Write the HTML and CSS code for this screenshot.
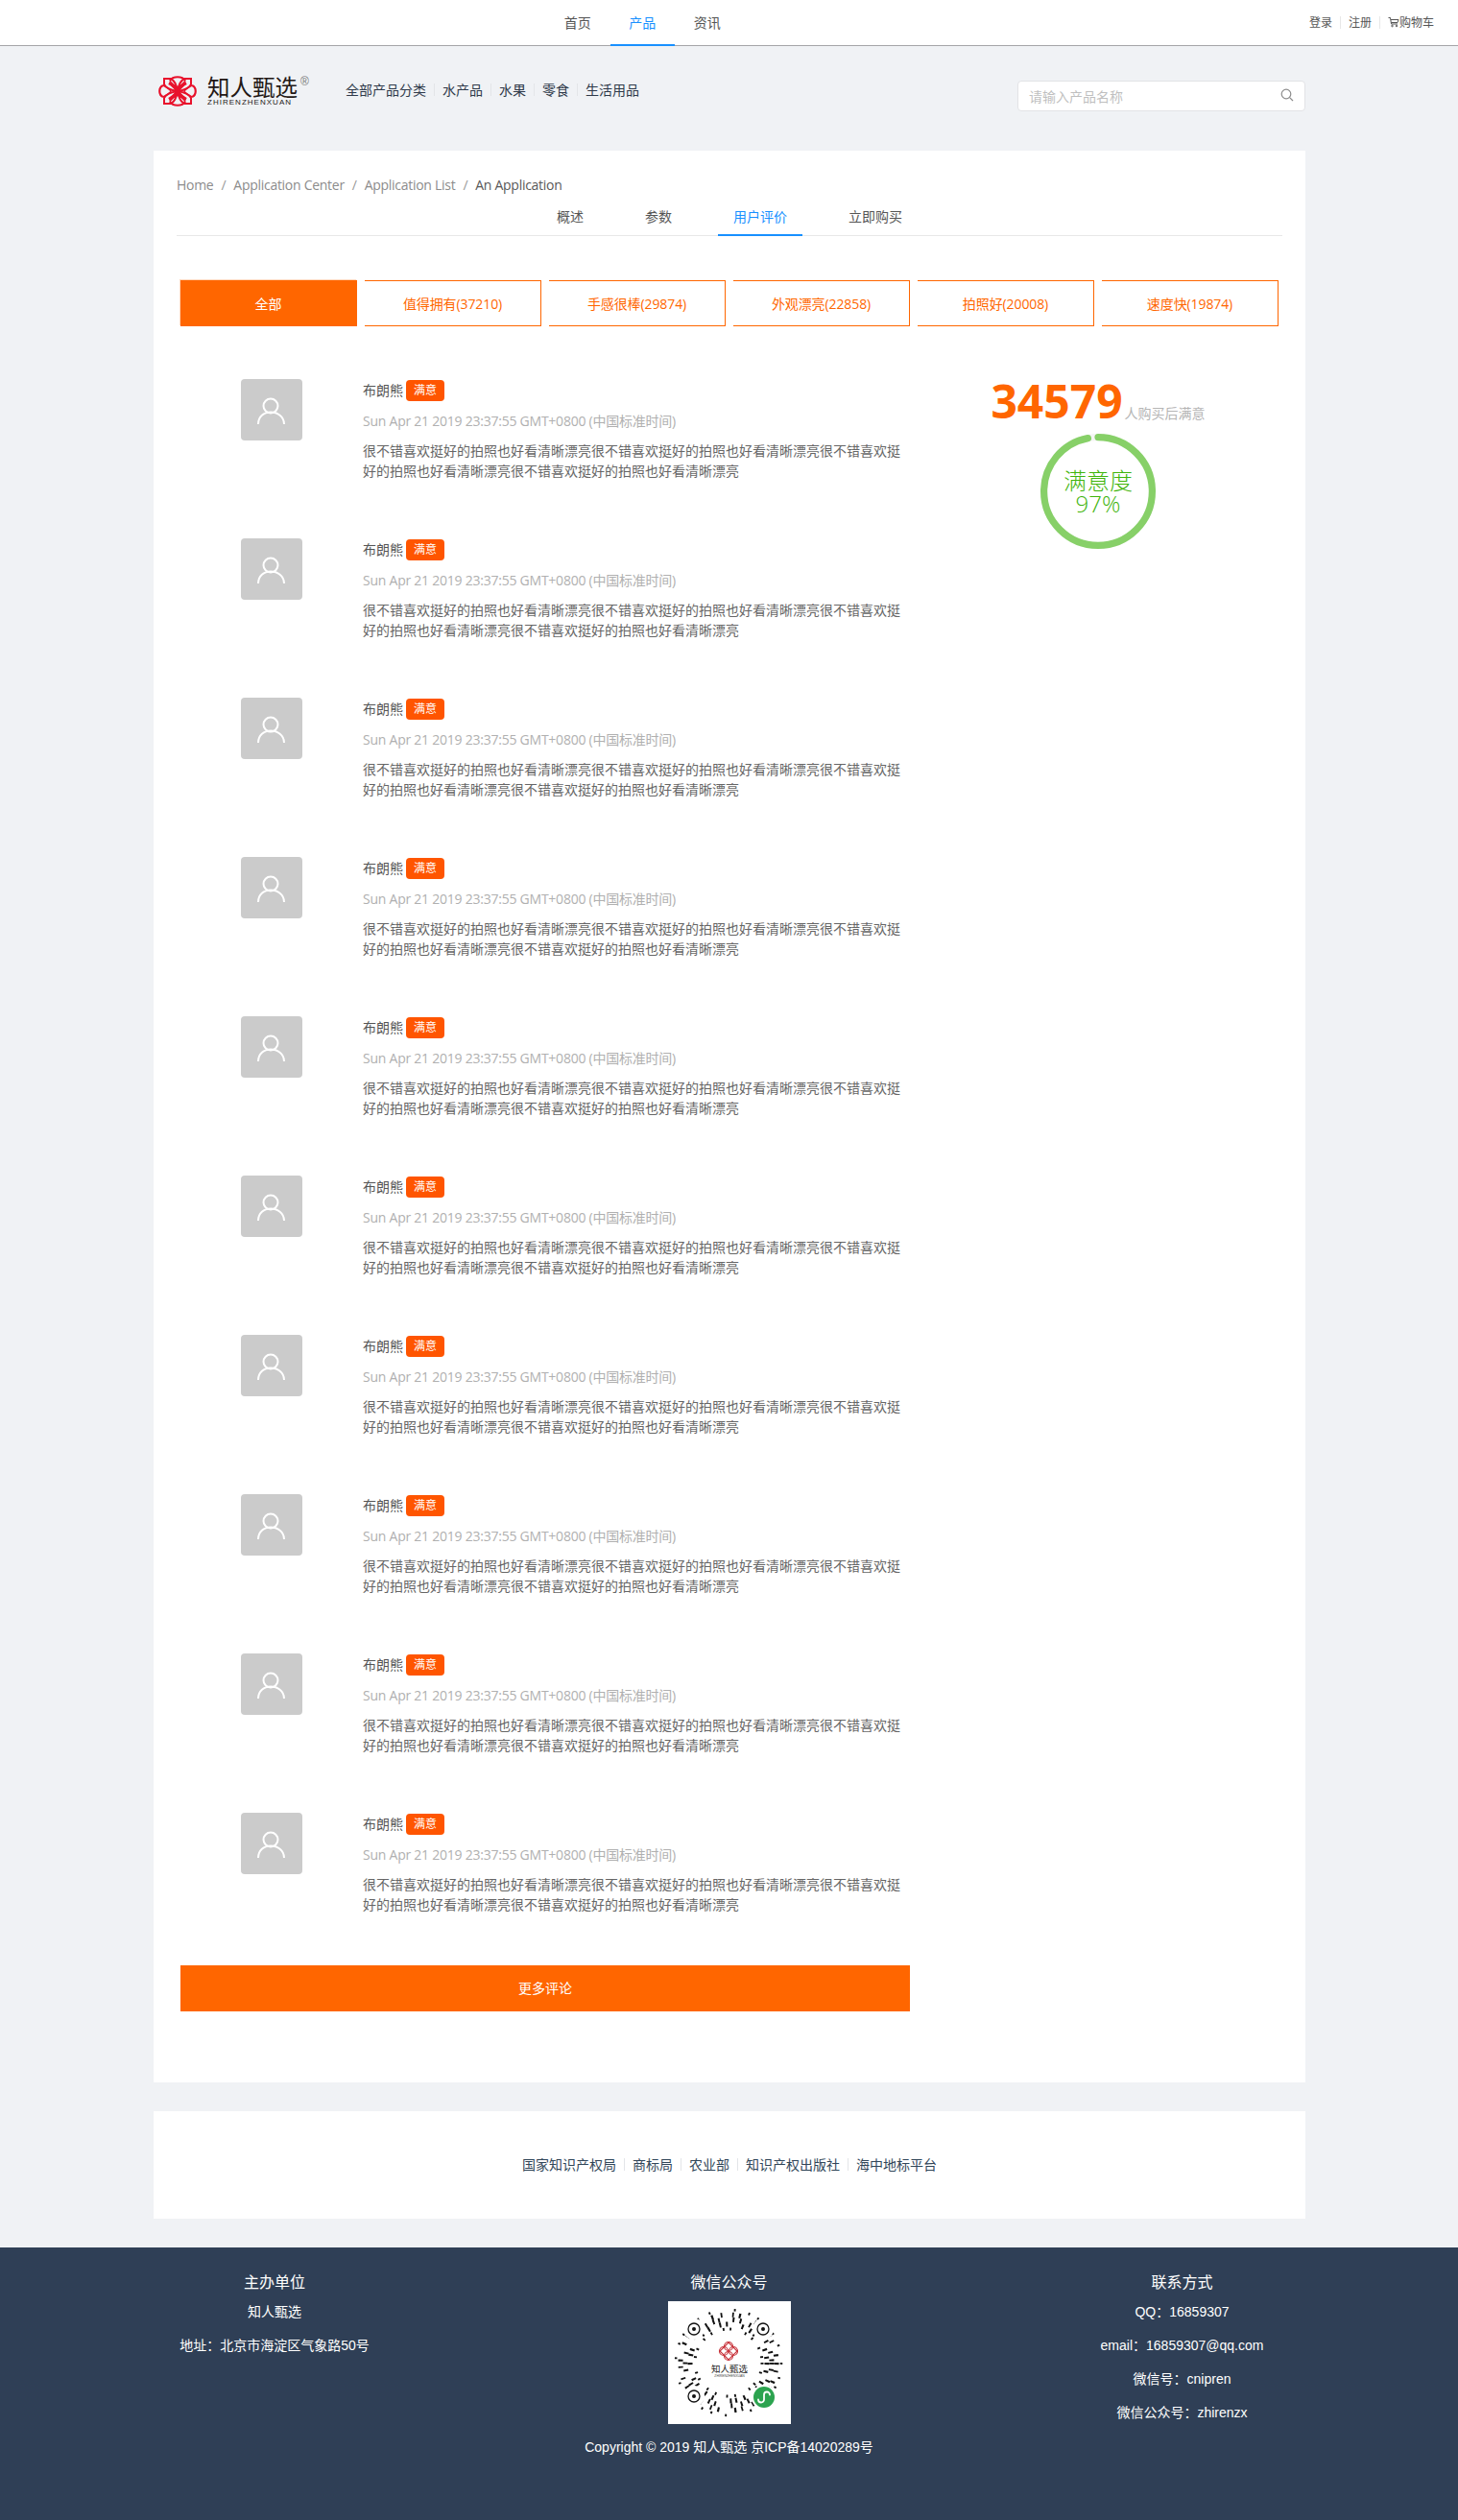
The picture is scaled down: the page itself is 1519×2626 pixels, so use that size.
FILE: index.html
```html
<!DOCTYPE html>
<html lang="zh-CN">
<head>
<meta charset="utf-8">
<title>知人甄选</title>
<link rel="stylesheet" href="styles.css">
</head>
<body>
<header class="topbar">
  <nav class="topnav">
    <a class="topnav-item">首页</a>
    <a class="topnav-item is-active">产品</a>
    <a class="topnav-item">资讯</a>
  </nav>
  <div class="userlinks">
    <a class="userlink">登录</a>
    <a class="userlink">注册</a>
    <a class="userlink cart">
      <svg class="cart-icon" viewBox="0 0 12 12" width="12" height="12" fill="none" stroke="#555" stroke-width="1"><path d="M0.5 1.5h2l1 6.5h6.5M3 3.5h8l-1 3H3.4"/><circle cx="4.5" cy="10" r="0.8"/><circle cx="9" cy="10" r="0.8"/></svg>购物车
    </a>
  </div>
</header>

<section class="masthead">
  <div class="logo">
    <svg class="logo-mark" viewBox="0 0 40 32" width="40" height="32" fill="none" stroke="#e8122c" stroke-width="2">
      <path d="M12 5C15 0 25 0 28 5M12 27C15 32 25 32 28 27M5 10C0 12 0 20 5 22M35 10C40 12 40 20 35 22" stroke-width="2.200"/>
      <path d="M6 3h7c4 2 6 7 7 13-7-1-12-3-14-7zM34 3h-7c-4 2-6 7-7 13 7-1 12-3 14-7zM6 29h7c4-2 6-7 7-13-7 1-12 3-14 7zM34 29h-7c-4-2-6-7-7-13 7 1 12 3 14 7z"/>
      <path d="M11 7.500c2 1 6 4 9 8.500M29 7.500c-2 1-6 4-9 8.500M11 24.500c2-1 6-4 9-8.500M29 24.500c-2-1-6-4-9-8.500" stroke-width="3.200"/>
      <path d="M5 10c4 2 7 4 8 6-1 2-4 4-8 6M35 10c-4 2-7 4-8 6 1 2 4 4 8 6M12 5c2 4 6 6 8 7 2-1 6-3 8-7M12 27c2-4 6-6 8-7 2 1 6 3 8 7" stroke-width="1.500"/>
    </svg>
    <div class="logo-words">
      <span class="logo-cn">知人甄选</span>
      <span class="logo-en">ZHIRENZHENXUAN</span>
    </div>
    <span class="logo-reg">®</span>
  </div>
  <nav class="catnav">
    <a class="catnav-item">全部产品分类</a>
    <a class="catnav-item">水产品</a>
    <a class="catnav-item">水果</a>
    <a class="catnav-item">零食</a>
    <a class="catnav-item">生活用品</a>
  </nav>
  <div class="search">
    <span class="search-placeholder">请输入产品名称</span>
    <svg class="search-icon" viewBox="0 0 14 14" width="14" height="14" fill="none" stroke="#8c8c8c" stroke-width="1.2"><circle cx="6" cy="6" r="4.8"/><path d="M9.6 9.6L13 13"/></svg>
  </div>
</section>

<main class="card">
  <div class="crumbs">
    <span class="crumb">Home</span><span class="crumb-sep">/</span>
    <span class="crumb">Application Center</span><span class="crumb-sep">/</span>
    <span class="crumb">Application List</span><span class="crumb-sep">/</span>
    <span class="crumb crumb-current">An Application</span>
  </div>
  <div class="tabs">
    <a class="tab">概述</a>
    <a class="tab">参数</a>
    <a class="tab is-active">用户评价</a>
    <a class="tab">立即购买</a>
  </div>

  <div class="filters">
    <a class="filter is-active">全部</a>
    <a class="filter">值得拥有(37210)</a>
    <a class="filter">手感很棒(29874)</a>
    <a class="filter">外观漂亮(22858)</a>
    <a class="filter">拍照好(20008)</a>
    <a class="filter">速度快(19874)</a>
  </div>

  <div class="content">
    <div class="reviews-col">
      <ul class="reviews">
        <li class="review">
          <div class="avatar"><svg viewBox="0 0 64 64" width="64" height="64" fill="none" stroke="#fff" stroke-width="2"><circle cx="31" cy="28" r="7.5"/><path d="M18 47c0-8 6-12.500 13-12.500S45 39 45 47"/></svg></div>
          <div class="review-body">
            <div class="review-head"><span class="review-name">布朗熊</span><span class="badge">满意</span></div>
            <div class="review-time">Sun Apr 21 2019 23:37:55 GMT+0800 (中国标准时间)</div>
            <p class="review-text">很不错喜欢挺好的拍照也好看清晰漂亮很不错喜欢挺好的拍照也好看清晰漂亮很不错喜欢挺好的拍照也好看清晰漂亮很不错喜欢挺好的拍照也好看清晰漂亮</p>
          </div>
        </li>
        <li class="review">
          <div class="avatar"><svg viewBox="0 0 64 64" width="64" height="64" fill="none" stroke="#fff" stroke-width="2"><circle cx="31" cy="28" r="7.5"/><path d="M18 47c0-8 6-12.500 13-12.500S45 39 45 47"/></svg></div>
          <div class="review-body">
            <div class="review-head"><span class="review-name">布朗熊</span><span class="badge">满意</span></div>
            <div class="review-time">Sun Apr 21 2019 23:37:55 GMT+0800 (中国标准时间)</div>
            <p class="review-text">很不错喜欢挺好的拍照也好看清晰漂亮很不错喜欢挺好的拍照也好看清晰漂亮很不错喜欢挺好的拍照也好看清晰漂亮很不错喜欢挺好的拍照也好看清晰漂亮</p>
          </div>
        </li>
        <li class="review">
          <div class="avatar"><svg viewBox="0 0 64 64" width="64" height="64" fill="none" stroke="#fff" stroke-width="2"><circle cx="31" cy="28" r="7.5"/><path d="M18 47c0-8 6-12.500 13-12.500S45 39 45 47"/></svg></div>
          <div class="review-body">
            <div class="review-head"><span class="review-name">布朗熊</span><span class="badge">满意</span></div>
            <div class="review-time">Sun Apr 21 2019 23:37:55 GMT+0800 (中国标准时间)</div>
            <p class="review-text">很不错喜欢挺好的拍照也好看清晰漂亮很不错喜欢挺好的拍照也好看清晰漂亮很不错喜欢挺好的拍照也好看清晰漂亮很不错喜欢挺好的拍照也好看清晰漂亮</p>
          </div>
        </li>
        <li class="review">
          <div class="avatar"><svg viewBox="0 0 64 64" width="64" height="64" fill="none" stroke="#fff" stroke-width="2"><circle cx="31" cy="28" r="7.5"/><path d="M18 47c0-8 6-12.500 13-12.500S45 39 45 47"/></svg></div>
          <div class="review-body">
            <div class="review-head"><span class="review-name">布朗熊</span><span class="badge">满意</span></div>
            <div class="review-time">Sun Apr 21 2019 23:37:55 GMT+0800 (中国标准时间)</div>
            <p class="review-text">很不错喜欢挺好的拍照也好看清晰漂亮很不错喜欢挺好的拍照也好看清晰漂亮很不错喜欢挺好的拍照也好看清晰漂亮很不错喜欢挺好的拍照也好看清晰漂亮</p>
          </div>
        </li>
        <li class="review">
          <div class="avatar"><svg viewBox="0 0 64 64" width="64" height="64" fill="none" stroke="#fff" stroke-width="2"><circle cx="31" cy="28" r="7.5"/><path d="M18 47c0-8 6-12.500 13-12.500S45 39 45 47"/></svg></div>
          <div class="review-body">
            <div class="review-head"><span class="review-name">布朗熊</span><span class="badge">满意</span></div>
            <div class="review-time">Sun Apr 21 2019 23:37:55 GMT+0800 (中国标准时间)</div>
            <p class="review-text">很不错喜欢挺好的拍照也好看清晰漂亮很不错喜欢挺好的拍照也好看清晰漂亮很不错喜欢挺好的拍照也好看清晰漂亮很不错喜欢挺好的拍照也好看清晰漂亮</p>
          </div>
        </li>
        <li class="review">
          <div class="avatar"><svg viewBox="0 0 64 64" width="64" height="64" fill="none" stroke="#fff" stroke-width="2"><circle cx="31" cy="28" r="7.5"/><path d="M18 47c0-8 6-12.500 13-12.500S45 39 45 47"/></svg></div>
          <div class="review-body">
            <div class="review-head"><span class="review-name">布朗熊</span><span class="badge">满意</span></div>
            <div class="review-time">Sun Apr 21 2019 23:37:55 GMT+0800 (中国标准时间)</div>
            <p class="review-text">很不错喜欢挺好的拍照也好看清晰漂亮很不错喜欢挺好的拍照也好看清晰漂亮很不错喜欢挺好的拍照也好看清晰漂亮很不错喜欢挺好的拍照也好看清晰漂亮</p>
          </div>
        </li>
        <li class="review">
          <div class="avatar"><svg viewBox="0 0 64 64" width="64" height="64" fill="none" stroke="#fff" stroke-width="2"><circle cx="31" cy="28" r="7.5"/><path d="M18 47c0-8 6-12.500 13-12.500S45 39 45 47"/></svg></div>
          <div class="review-body">
            <div class="review-head"><span class="review-name">布朗熊</span><span class="badge">满意</span></div>
            <div class="review-time">Sun Apr 21 2019 23:37:55 GMT+0800 (中国标准时间)</div>
            <p class="review-text">很不错喜欢挺好的拍照也好看清晰漂亮很不错喜欢挺好的拍照也好看清晰漂亮很不错喜欢挺好的拍照也好看清晰漂亮很不错喜欢挺好的拍照也好看清晰漂亮</p>
          </div>
        </li>
        <li class="review">
          <div class="avatar"><svg viewBox="0 0 64 64" width="64" height="64" fill="none" stroke="#fff" stroke-width="2"><circle cx="31" cy="28" r="7.5"/><path d="M18 47c0-8 6-12.500 13-12.500S45 39 45 47"/></svg></div>
          <div class="review-body">
            <div class="review-head"><span class="review-name">布朗熊</span><span class="badge">满意</span></div>
            <div class="review-time">Sun Apr 21 2019 23:37:55 GMT+0800 (中国标准时间)</div>
            <p class="review-text">很不错喜欢挺好的拍照也好看清晰漂亮很不错喜欢挺好的拍照也好看清晰漂亮很不错喜欢挺好的拍照也好看清晰漂亮很不错喜欢挺好的拍照也好看清晰漂亮</p>
          </div>
        </li>
        <li class="review">
          <div class="avatar"><svg viewBox="0 0 64 64" width="64" height="64" fill="none" stroke="#fff" stroke-width="2"><circle cx="31" cy="28" r="7.5"/><path d="M18 47c0-8 6-12.500 13-12.500S45 39 45 47"/></svg></div>
          <div class="review-body">
            <div class="review-head"><span class="review-name">布朗熊</span><span class="badge">满意</span></div>
            <div class="review-time">Sun Apr 21 2019 23:37:55 GMT+0800 (中国标准时间)</div>
            <p class="review-text">很不错喜欢挺好的拍照也好看清晰漂亮很不错喜欢挺好的拍照也好看清晰漂亮很不错喜欢挺好的拍照也好看清晰漂亮很不错喜欢挺好的拍照也好看清晰漂亮</p>
          </div>
        </li>
        <li class="review">
          <div class="avatar"><svg viewBox="0 0 64 64" width="64" height="64" fill="none" stroke="#fff" stroke-width="2"><circle cx="31" cy="28" r="7.5"/><path d="M18 47c0-8 6-12.500 13-12.500S45 39 45 47"/></svg></div>
          <div class="review-body">
            <div class="review-head"><span class="review-name">布朗熊</span><span class="badge">满意</span></div>
            <div class="review-time">Sun Apr 21 2019 23:37:55 GMT+0800 (中国标准时间)</div>
            <p class="review-text">很不错喜欢挺好的拍照也好看清晰漂亮很不错喜欢挺好的拍照也好看清晰漂亮很不错喜欢挺好的拍照也好看清晰漂亮很不错喜欢挺好的拍照也好看清晰漂亮</p>
          </div>
        </li>
      </ul>
      <a class="more">更多评论</a>
    </div>

    <aside class="stats">
      <div class="stats-line"><span class="stats-num">34579</span><span class="stats-label">人购买后满意</span></div>
      <div class="ring">
        <svg class="ring-svg" viewBox="0 0 100 100" width="120" height="120" fill="none" stroke-width="6">
          <circle cx="50" cy="50" r="47" stroke="#f5f5f5"/>
          <circle cx="50" cy="50" r="47" stroke="#87d068" stroke-linecap="round" pathLength="100" stroke-dasharray="97 3" transform="rotate(-90 50 50)"/>
        </svg>
        <div class="ring-text"><div>满意度</div><div>97%</div></div>
      </div>
    </aside>
  </div>
</main>

<section class="links">
  <a class="link">国家知识产权局</a>
  <a class="link">商标局</a>
  <a class="link">农业部</a>
  <a class="link">知识产权出版社</a>
  <a class="link">海中地标平台</a>
</section>

<footer class="footer">
  <div class="footer-col">
    <h4 class="footer-title">主办单位</h4>
    <p class="footer-line">知人甄选</p>
    <p class="footer-line">地址：北京市海淀区气象路50号</p>
  </div>
  <div class="footer-col">
    <h4 class="footer-title">微信公众号</h4>
    <svg class="qr" viewBox="0 0 128 128" width="128" height="128">
      <rect width="128" height="128" fill="#fff"/>
      <g fill="none" stroke="#111">
        <circle cx="63" cy="64" r="35" stroke-width="3" pathLength="360" stroke-dasharray="3 13 3 19 3 9 3 24 3 11 3 17"/>
        <circle cx="63" cy="64" r="40" stroke-width="5" pathLength="360" stroke-dasharray="3 9 3 15 3 7 3 21 3 10 3 5 3 25"/>
        <circle cx="63" cy="64" r="45" stroke-width="5" pathLength="360" stroke-dasharray="2.500 6 2.500 13 2.500 8 2.500 5 2.500 17 2.500 7 2.500 11 2.500 20"/>
        <circle cx="63" cy="64" r="50" stroke-width="5" pathLength="360" stroke-dasharray="2.500 7 2 11 2.500 5 2 15 2.500 9 2 12 2 6 2.500 18"/>
        <circle cx="63" cy="64" r="55" stroke-width="2.500" pathLength="360" stroke-dasharray="2 14 2 9 2 21 2 12 2 26"/>
      </g>
      <circle cx="27" cy="29" r="11" fill="#fff"/>
      <circle cx="99" cy="29" r="11" fill="#fff"/>
      <circle cx="27" cy="99" r="11" fill="#fff"/>
      <g fill="none" stroke="#111" stroke-width="1.300">
        <circle cx="27" cy="29" r="6"/><circle cx="99" cy="29" r="6"/><circle cx="27" cy="99" r="6"/>
      </g>
      <g fill="#111">
        <circle cx="27" cy="29" r="2"/><circle cx="99" cy="29" r="2"/><circle cx="27" cy="99" r="2"/>
      </g>
      <g fill="none" stroke="#c8353d" stroke-width="1.200">
        <path d="M63 43l9 9-9 9-9-9z"/><circle cx="63" cy="47" r="4.500"/><circle cx="63" cy="57" r="4.500"/><circle cx="58" cy="52" r="4.500"/><circle cx="68" cy="52" r="4.500"/>
      </g>
      <text class="qr-brand" x="64" y="73.500" text-anchor="middle">知人甄选</text>
      <text class="qr-sub" x="64" y="79" text-anchor="middle">ZHIRENZHENXUAN</text>
      <circle cx="100" cy="100" r="13" fill="#fff"/>
      <circle cx="100" cy="100" r="11" fill="#2ca34f"/>
      <path d="M94 102.500a3 3 0 1 0 6 0v-5a3 3 0 1 1 6 0" fill="none" stroke="#fff" stroke-width="1.800" stroke-linecap="round"/>
    </svg>
    <p class="footer-line">Copyright © 2019 知人甄选 京ICP备14020289号</p>
  </div>
  <div class="footer-col footer-col-contact">
    <h4 class="footer-title">联系方式</h4>
    <p class="footer-line">QQ：16859307</p>
    <p class="footer-line">email：16859307@qq.com</p>
    <p class="footer-line">微信号：cnipren</p>
    <p class="footer-line">微信公众号：zhirenzx</p>
  </div>
</footer>
</body>
</html>
```

FILE: styles.css
```css
* { box-sizing: border-box; }
html, body { margin: 0; padding: 0; }
body {
  background: #f0f2f5;
  font-family: "Open Sans", "Noto Sans CJK SC", sans-serif;
  font-size: 14px;
  color: #555;
}
a { color: inherit; text-decoration: none; }
ul { list-style: none; margin: 0; padding: 0; }
p, h4 { margin: 0; }

/* top bar */
.topbar {
  display: flex;
  height: 48px;
  padding: 0 25px 0 568px;
  background: #fff;
  border-bottom: 1px solid #a5a5a8;
}
.topnav { display: flex; height: 48px; }
.topnav-item {
  width: 67.500px;
  height: 48px;
  line-height: 48px;
  text-align: center;
  color: #555;
  border-bottom: 2px solid transparent;
}
.topnav-item.is-active { color: #1890ff; border-bottom-color: #1890ff; }
.userlinks { display: flex; align-items: center; margin-left: auto; height: 46px; }
.userlink {
  display: flex;
  align-items: center;
  height: 13px;
  padding: 0 8px;
  font-size: 12px;
  line-height: 13px;
  color: #555;
  border-left: 1px solid #e8e8e8;
}
.userlink:first-child { border-left: 0; }
.userlink:last-child { padding-right: 0; }
.cart-icon { margin-right: 0; flex: none; }

/* masthead */
.masthead {
  display: flex;
  align-items: flex-start;
  height: 109px;
  padding: 0 159px 0 165px;
}
.logo {
  display: flex;
  width: 157px;
  height: 32px;
  margin-top: 31px;
}
.logo-mark { flex: none; }
.logo-words { display: flex; flex-direction: column; margin: 0 0 0 11px; }
.logo-cn {
  font-size: 23.500px;
  line-height: 24px;
  color: #231815;
  font-weight: 400;
}
.logo-en {
  font-family: "Liberation Sans", sans-serif;
  font-size: 8px;
  line-height: 8px;
  letter-spacing: 1.020px;
  color: #231815;
  white-space: nowrap;
}
.logo-reg {
  font-family: "Liberation Sans", sans-serif;
  font-size: 12px;
  line-height: 12px;
  color: #777;
  margin: 0 0 0 3px;
}
.catnav { display: flex; align-items: center; margin: 34px 0 0 30px; height: 22px; }
.catnav-item {
  padding: 0 8px;
  height: 13px;
  line-height: 13px;
  color: #2f3a4a;
  border-left: 1px solid #e3e5e8;
}
.catnav-item:first-child { border-left: 0; }
.search {
  display: flex;
  align-items: center;
  justify-content: space-between;
  width: 300px;
  height: 32px;
  margin: 36px 0 0 auto;
  padding: 0 11px;
  background: #fff;
  border: 1px solid #e2e3e6;
  border-radius: 4px;
}
.search-placeholder { color: #bfbfbf; line-height: 22px; margin-top: 2px; }
.search-icon { flex: none; margin-top: -2px; }

/* main card */
.card {
  width: 1200px;
  height: 2013px;
  margin: 0 0 0 160px;
  padding: 25px 24px 0;
  background: #fff;
}
.crumbs { display: flex; height: 22px; line-height: 22px; color: #8c8c8c; white-space: pre; letter-spacing: -0.28px; }
.crumb-sep { margin: 0 8px; color: #999; }
.crumb-current { color: #595959; }
.tabs {
  display: flex;
  justify-content: center;
  gap: 32px;
  height: 42px;
  border-bottom: 1px solid #e8e8e8;
}
.tab {
  height: 42px;
  padding: 11px 16px 7px;
  line-height: 22px;
  color: #555;
  border-bottom: 2px solid transparent;
}
.tab.is-active { color: #1890ff; border-bottom-color: #1890ff; }

.filters { display: flex; gap: 8px; margin: 46px 0 53px 4px; }
.filter {
  width: 184px;
  height: 48px;
  line-height: 47px;
  text-align: center;
  color: #ff6600;
  border: 1px solid #ff6600;
  border-left: 0;
  letter-spacing: -0.1px;
}
.filter.is-active {
  color: #fff;
  background: #ff6600;
  box-shadow: -1px -1px 0 #ffd9bf;
}

.content { display: flex; gap: 8px; margin-left: 4px; }
.reviews-col { width: 760px; padding-top: 2px; }
.reviews { display: flex; flex-direction: column; gap: 60px; }
.review { display: flex; padding-left: 63px; }
.avatar {
  flex: none;
  width: 64px;
  height: 64px;
  margin-right: 63px;
  background: #cbcbcb;
  border-radius: 4px;
}
.avatar svg { display: block; }
.review-body { width: 566px; padding-top: 1px; }
.review-head { display: flex; align-items: center; height: 22px; }
.review-name { color: #555; margin: -2px 3px 0 0; }
.badge {
  width: 40px;
  height: 22px;
  line-height: 22px;
  text-align: center;
  font-size: 12px;
  color: #fff;
  background: #ff5500;
  border-radius: 4px;
}
.review-time { margin-top: 10px; line-height: 21px; color: #b0b0b0; white-space: nowrap; letter-spacing: -0.24px; }
.review-text { margin-top: 10px; line-height: 21px; color: #666; word-break: break-all; width: 562px; }
.more {
  display: block;
  height: 48px;
  margin-top: 53px;
  line-height: 48px;
  text-align: center;
  color: #fff;
  background: #ff6600;
}

.stats { width: 376px; display: flex; flex-direction: column; align-items: center; padding-top: 1px; }
.stats-line { display: flex; align-items: baseline; height: 48px; line-height: 48px; white-space: nowrap; }
.stats-num { font-size: 48px; font-weight: 700; color: #ff6600; }
.stats-label { margin-left: 2px; color: #b5b5b5; line-height: 14px; }
.ring { display: grid; place-items: center; width: 120px; height: 120px; margin-top: 10px; }
.ring-svg, .ring-text { grid-area: 1 / 1; }
.ring-svg { display: block; }
.ring-text { font-size: 24px; font-weight: 300; line-height: 24px; color: #3fb50c; text-align: center; padding-top: 1px; }

/* links card */
.links {
  display: flex;
  align-items: center;
  justify-content: center;
  width: 1200px;
  height: 112px;
  margin: 30px 0 30px 160px;
  padding-bottom: 2px;
  background: #fff;
}
.link {
  padding: 0 8px;
  height: 13px;
  line-height: 13px;
  color: #314659;
  border-left: 1px solid #e3e5e8;
}
.link:first-child { border-left: 0; }

/* footer */
.footer {
  display: grid;
  grid-template-columns: 200px 1fr 200px;
  height: 284px;
  padding: 25px 186px 0;
  background: #2f3f56;
  font-family: "Liberation Sans", "Noto Sans CJK SC", sans-serif;
  color: #fff;
  text-align: center;
}
.footer-col-contact { padding-right: 3px; }
.footer-title { margin-bottom: 8px; font-size: 16px; font-weight: 400; line-height: 24px; }
.footer-line { margin-bottom: 14px; line-height: 21px; white-space: nowrap; }
.qr { display: block; margin: -1px auto 14px; }
.qr-brand { font-family: "Noto Sans CJK SC", sans-serif; font-size: 9.500px; fill: #222; }
.qr-sub { font-family: "Liberation Sans", sans-serif; font-size: 3.400px; fill: #444; }
```
